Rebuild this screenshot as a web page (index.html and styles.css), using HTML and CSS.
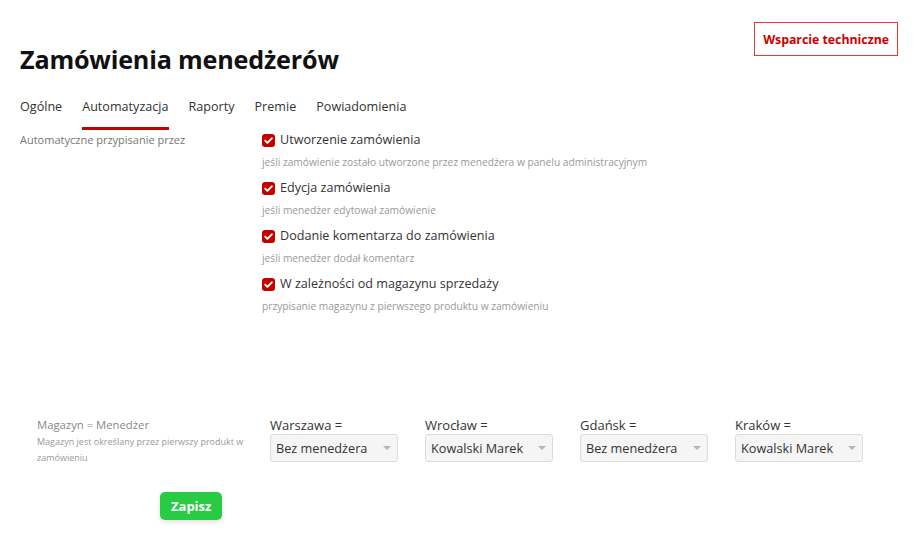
FILE: index.html
```html
<!DOCTYPE html>
<html lang="pl">
<head>
<meta charset="utf-8">
<title>Zamówienia menedżerów</title>
<link rel="stylesheet" href="styles.css">
</head>
<body>
<div class="page">
  <header class="header">
    <h1 class="title">Zamówienia menedżerów</h1>
    <button class="support">Wsparcie techniczne</button>
  </header>

  <nav class="tabs">
    <span class="tab">Ogólne</span>
    <span class="tab active">Automatyzacja</span>
    <span class="tab">Raporty</span>
    <span class="tab">Premie</span>
    <span class="tab">Powiadomienia</span>
  </nav>

  <section class="settings">
    <div class="settings-label">Automatyczne przypisanie przez</div>
    <div class="options">
      <div class="option">
        <label class="check"><span class="box"><svg viewBox="0 0 14 14"><path d="M3.4 7.2l2.4 2.4 4.8-5" fill="none" stroke="#fff" stroke-width="2" stroke-linecap="round" stroke-linejoin="round"/></svg></span>Utworzenie zamówienia</label>
        <div class="desc">jeśli zamówienie zostało utworzone przez menedżera w panelu administracyjnym</div>
      </div>
      <div class="option">
        <label class="check"><span class="box"><svg viewBox="0 0 14 14"><path d="M3.4 7.2l2.4 2.4 4.8-5" fill="none" stroke="#fff" stroke-width="2" stroke-linecap="round" stroke-linejoin="round"/></svg></span>Edycja zamówienia</label>
        <div class="desc">jeśli menedżer edytował zamówienie</div>
      </div>
      <div class="option">
        <label class="check"><span class="box"><svg viewBox="0 0 14 14"><path d="M3.4 7.2l2.4 2.4 4.8-5" fill="none" stroke="#fff" stroke-width="2" stroke-linecap="round" stroke-linejoin="round"/></svg></span>Dodanie komentarza do zamówienia</label>
        <div class="desc">jeśli menedżer dodał komentarz</div>
      </div>
      <div class="option">
        <label class="check"><span class="box"><svg viewBox="0 0 14 14"><path d="M3.4 7.2l2.4 2.4 4.8-5" fill="none" stroke="#fff" stroke-width="2" stroke-linecap="round" stroke-linejoin="round"/></svg></span>W zależności od magazynu sprzedaży</label>
        <div class="desc">przypisanie magazynu z pierwszego produktu w zamówieniu</div>
      </div>
    </div>
  </section>

  <section class="mapping">
    <div class="mapping-info">
      <div class="mapping-title">Magazyn = Menedżer</div>
      <div class="mapping-desc">Magazyn jest określany przez pierwszy produkt w zamówieniu</div>
    </div>
    <div class="warehouses">
      <div class="warehouse">
        <div class="city">Warszawa =</div>
        <div class="select"><span>Bez menedżera</span><span class="caret"></span></div>
      </div>
      <div class="warehouse">
        <div class="city">Wrocław =</div>
        <div class="select"><span>Kowalski Marek</span><span class="caret"></span></div>
      </div>
      <div class="warehouse">
        <div class="city">Gdańsk =</div>
        <div class="select"><span>Bez menedżera</span><span class="caret"></span></div>
      </div>
      <div class="warehouse">
        <div class="city">Kraków =</div>
        <div class="select"><span>Kowalski Marek</span><span class="caret"></span></div>
      </div>
    </div>
  </section>

  <div class="actions">
    <button class="save">Zapisz</button>
  </div>
</div>
</body>
</html>
```

FILE: styles.css
```css
* { box-sizing: border-box; }

html, body {
  margin: 0;
  padding: 0;
  background: #fff;
}

body {
  font-family: "Open Sans", "Noto Sans", sans-serif;
  color: #333;
}

.page {
  width: 920px;
  height: 545px;
  padding: 0 22px 0 20px;
}

.header {
  display: flex;
  justify-content: space-between;
  align-items: flex-start;
  padding-top: 22px;
}

.title {
  margin: 20px 0 0;
  font-size: 25.2px;
  line-height: 34px;
  font-weight: 700;
  color: #111;
  letter-spacing: -0.2px;
}

.support {
  height: 34px;
  padding: 0 8px;
  background: #fff;
  border: 1px solid #e53935;
  color: #cc0000;
  font-family: inherit;
  font-weight: 700;
  font-size: 12.3px;
  cursor: pointer;
}

.tabs {
  display: flex;
  gap: 20px;
  margin-top: 22px;
}

.tab {
  font-size: 12.6px;
  line-height: 18px;
  color: #333;
  padding-bottom: 11px;
  border-bottom: 3px solid transparent;
}

.tab.active {
  border-bottom-color: #c40000;
}

.settings {
  display: grid;
  grid-template-columns: 242px 1fr;
  margin-top: -2px;
}

.settings-label {
  font-size: 11px;
  line-height: 20px;
  color: #777;
  padding-top: 2px;
}

.options {
  display: flex;
  flex-direction: column;
}

.option {
  padding-top: 2px;
  padding-bottom: 6px;
}

.check {
  display: flex;
  align-items: center;
  gap: 5px;
  font-size: 12.6px;
  line-height: 20px;
  color: #333;
}

.box {
  width: 13px;
  height: 13px;
  border-radius: 3px;
  background: #c40000;
  display: flex;
  flex: none;
}

.box svg {
  width: 13px;
  height: 13px;
}

.desc {
  margin-top: 4px;
  font-size: 10.2px;
  line-height: 16px;
  color: #999;
}

.mapping {
  display: flex;
  margin-top: 96px;
  padding-left: 17px;
}

.mapping-info {
  width: 233px;
}

.mapping-title {
  font-size: 11.3px;
  line-height: 18px;
  color: #888;
}

.mapping-desc {
  font-size: 9px;
  line-height: 16px;
  color: #999;
  width: 215px;
}

.warehouses {
  display: flex;
  gap: 27px;
}

.warehouse {
  width: 128px;
}

.city {
  font-size: 13px;
  line-height: 18px;
  color: #333;
}

.select {
  display: flex;
  align-items: center;
  justify-content: space-between;
  height: 28px;
  padding: 0 6px 0 5px;
  background: #f5f5f6;
  border: 1px solid #dcdcdc;
  border-radius: 3px;
  font-size: 12.7px;
  color: #333;
}

.caret {
  width: 0;
  height: 0;
  border-left: 4px solid transparent;
  border-right: 4px solid transparent;
  border-top: 4px solid #b5b5b5;
}

.actions {
  padding-left: 140px;
  margin-top: 26px;
}

.save {
  height: 28px;
  padding: 0 11px;
  background: #27cc43;
  color: #fff;
  border: none;
  border-radius: 5px;
  font-family: inherit;
  font-weight: 700;
  font-size: 13px;
  box-shadow: 0 2px 5px rgba(0,0,0,0.12);
}
```
